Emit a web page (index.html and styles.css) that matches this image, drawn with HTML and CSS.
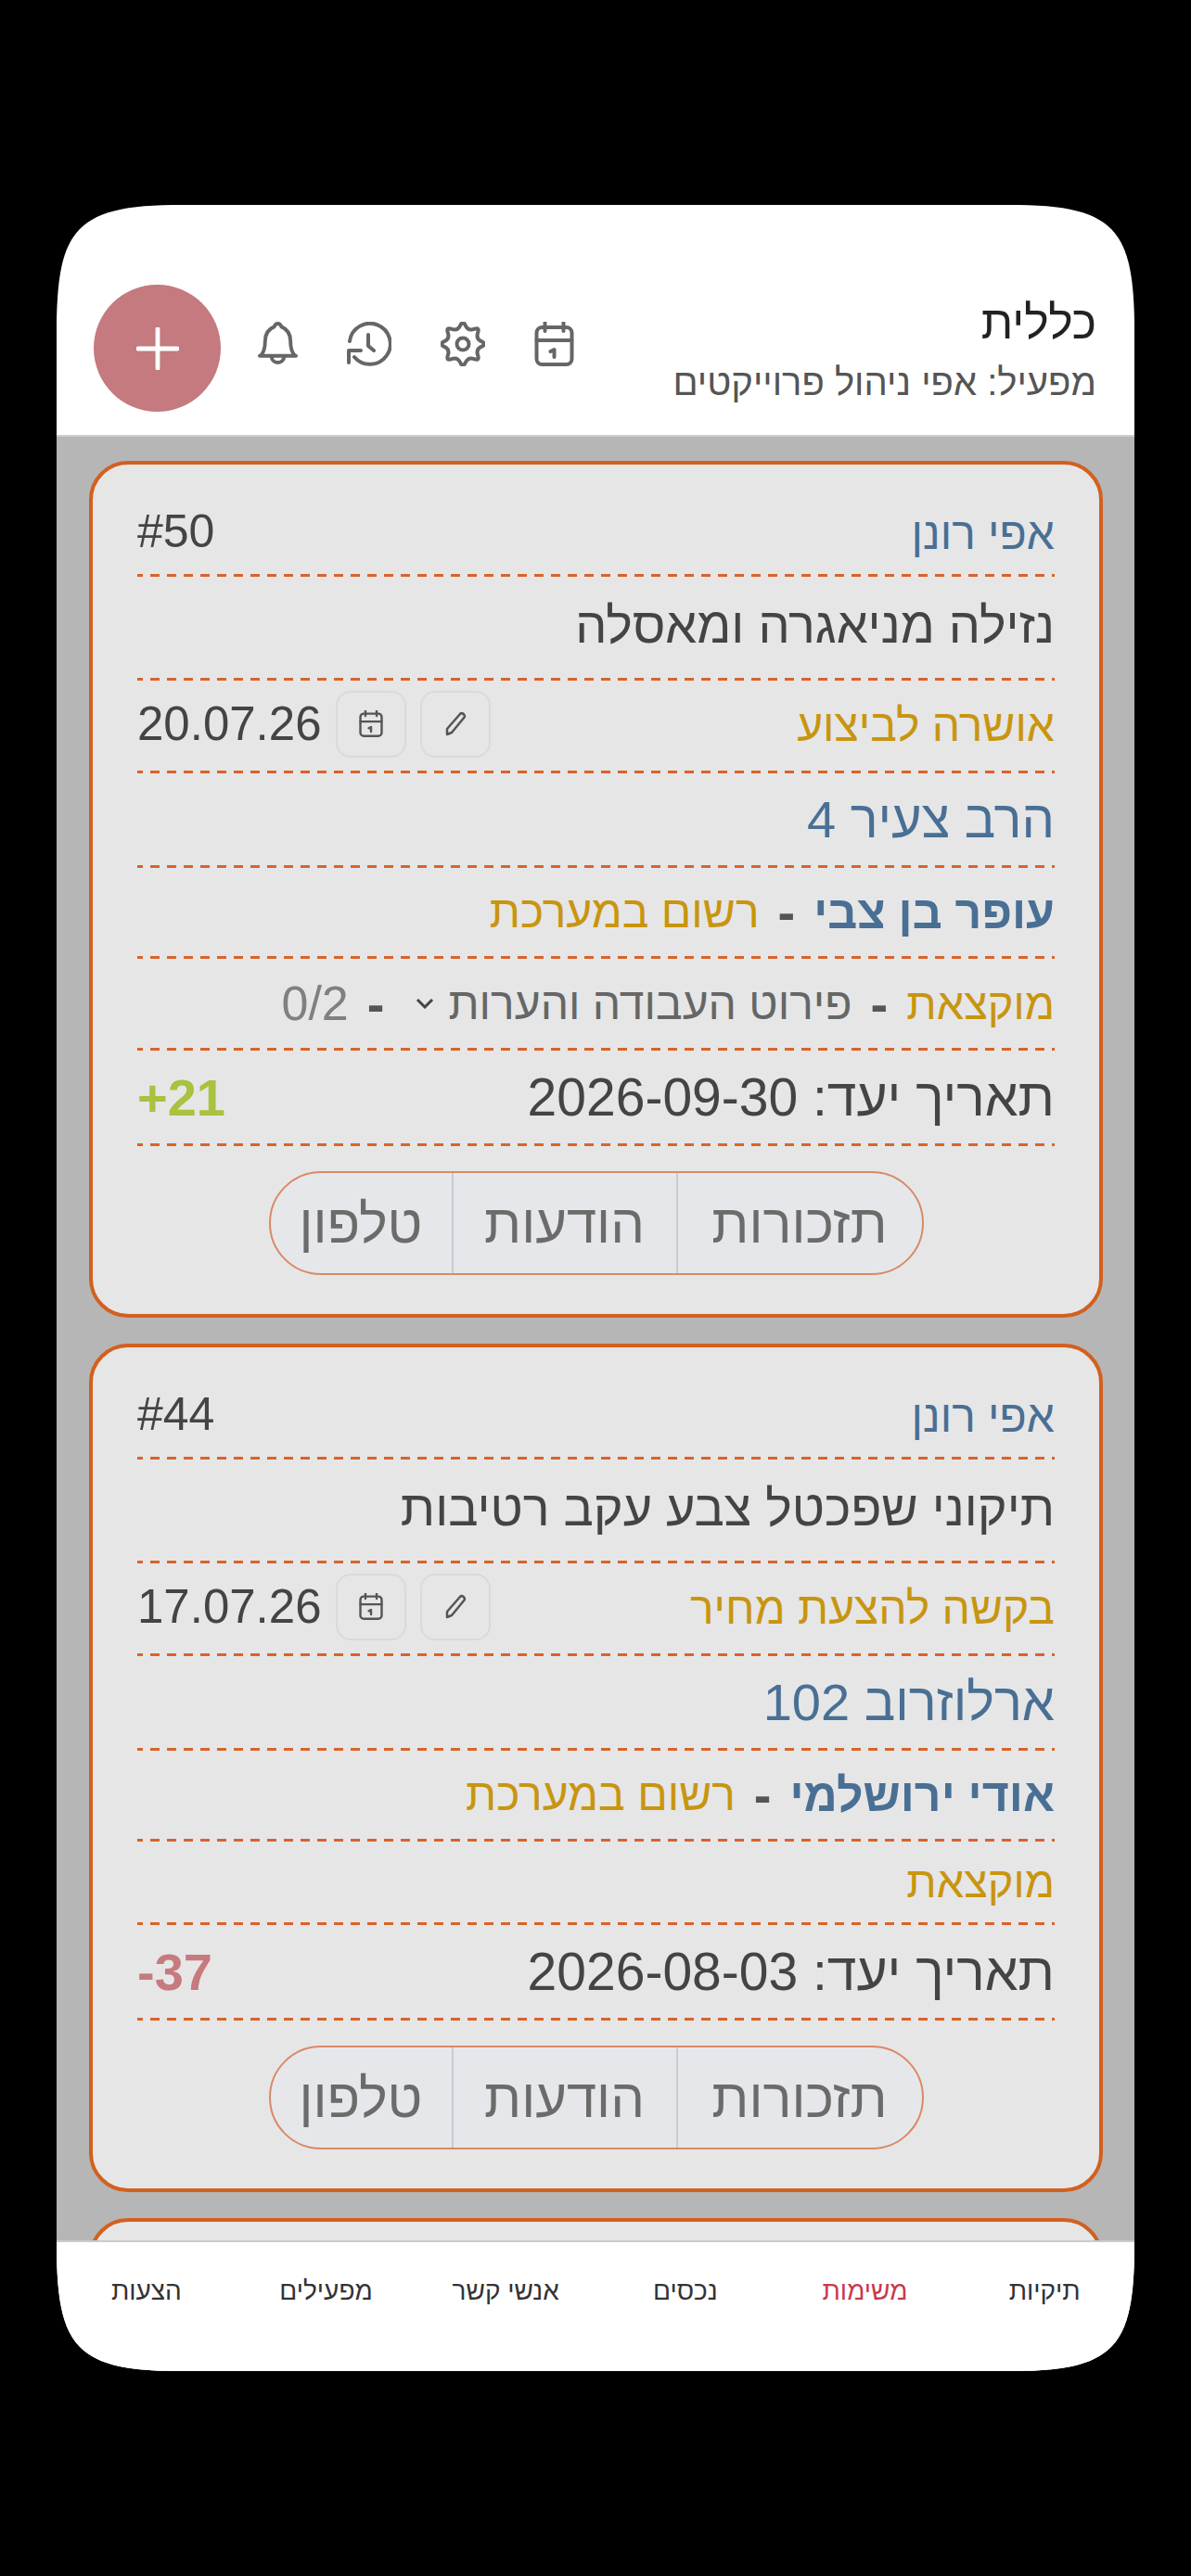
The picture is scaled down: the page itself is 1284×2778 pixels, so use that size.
FILE: index.html
```html
<!DOCTYPE html>
<html lang="he" dir="rtl">
  <head>
    <meta charset="utf-8">
    <title>כללית</title>
    <link rel="stylesheet" href="styles.css">
  </head>
  <body>
    <div class="screen">
      <header class="top-bar">
        <div class="top-titles">
          <h1>כללית</h1>
          <p>מפעיל: אפי ניהול פרוייקטים</p>
        </div>
        <div class="top-actions">
          <svg class="top-icon calendar-icon" viewBox="0 0 42 48"><rect x="2" y="6" width="38" height="40" rx="6"/><path d="M2 20H40M11 1V10M31 1V10M17 32L21 30V38"/></svg>
          <svg class="top-icon" viewBox="0 0 48 48"><path d="M43.93 26.87Q37.86 29.74 40.12 36.06T36.06 40.12T26.87 43.93T21.13 43.93T11.94 40.12T7.88 36.06T4.07 26.87T4.07 21.13T7.88 11.94T11.94 7.88T21.13 4.07T26.87 4.07T36.06 7.88T40.12 11.94T43.93 21.13T43.93 26.87Z"/><circle cx="24" cy="24" r="6.5"/></svg>
          <svg class="top-icon" viewBox="0 0 48 48"><path d="M3 21A22 22 0 1 1 8 38M2 44V31H15M23 14V26L29 31"/></svg>
          <svg class="top-icon bell-icon" viewBox="0 0 44 48"><path d="M2 37H42M3 37C7 33 8 29 8 21C8 12 13 7 18 5C19 2 21 1.5 22 1.5C23 1.5 25 2 26 5C31 7 36 12 36 21C36 29 37 33 41 37M15 37C15 47 29 47 29 37"/></svg>
          <button class="add-button">
            <svg viewBox="0 0 48 48"><path d="M24 2V46M2 24H46"/></svg>
          </button>
        </div>
      </header>

      <main class="task-list">
        <section class="task-card">
          <div class="task-row row-head">
            <span class="owner">אפי רונן</span>
            <span class="task-num">#50</span>
          </div>
          <div class="task-row row-title">נזילה מניאגרה ומאסלה</div>
          <div class="task-row row-status">
            <span class="status">אושרה לביצוע</span>
            <div class="date-group">
              <button class="small-button"><svg class="pencil-icon" viewBox="0 0 24 28"><path d="M3 25L3 19L17 3C19 1 22 3 22 6L8 23Z"/></svg></button>
              <button class="small-button"><svg class="small-calendar" viewBox="0 0 42 48"><rect x="2" y="6" width="38" height="40" rx="6"/><path d="M2 20H40M11 1V10M31 1V10M17 32L21 30V38"/></svg></button>
              <span class="short-date">20.07.26</span>
            </div>
          </div>
          <div class="task-row row-address">הרב צעיר 4</div>
          <div class="task-row row-person">
            <strong>עופר בן צבי</strong>
            <span class="dash">-</span>
            <span class="status">רשום במערכת</span>
          </div>
          <div class="task-row row-assign">
            <span class="status">מוקצאת</span>
            <span class="dash">-</span>
            <span class="details">פירוט העבודה והערות</span>
            <svg class="chevron" viewBox="0 0 20 12"><path d="M2 2L10 10L18 2"/></svg>
            <span class="dash">-</span>
            <span class="count">0/2</span>
          </div>
          <div class="task-row row-due">
            <span>תאריך יעד: 2026-09-30</span>
            <span class="days days-left">+21</span>
          </div>
          <div class="tabs">
            <a class="tab tab-a" href="#">תזכורות</a>
            <a class="tab tab-b" href="#">הודעות</a>
            <a class="tab tab-c" href="#">טלפון</a>
          </div>
        </section>

        <section class="task-card">
          <div class="task-row row-head">
            <span class="owner">אפי רונן</span>
            <span class="task-num">#44</span>
          </div>
          <div class="task-row row-title">תיקוני שפכטל צבע עקב רטיבות</div>
          <div class="task-row row-status">
            <span class="status">בקשה להצעת מחיר</span>
            <div class="date-group">
              <button class="small-button"><svg class="pencil-icon" viewBox="0 0 24 28"><path d="M3 25L3 19L17 3C19 1 22 3 22 6L8 23Z"/></svg></button>
              <button class="small-button"><svg class="small-calendar" viewBox="0 0 42 48"><rect x="2" y="6" width="38" height="40" rx="6"/><path d="M2 20H40M11 1V10M31 1V10M17 32L21 30V38"/></svg></button>
              <span class="short-date">17.07.26</span>
            </div>
          </div>
          <div class="task-row row-address">ארלוזרוב 102</div>
          <div class="task-row row-person">
            <strong>אודי ירושלמי</strong>
            <span class="dash">-</span>
            <span class="status">רשום במערכת</span>
          </div>
          <div class="task-row row-assign row-assign-short">
            <span class="status">מוקצאת</span>
          </div>
          <div class="task-row row-due">
            <span>תאריך יעד: 2026-08-03</span>
            <span class="days days-late">-37</span>
          </div>
          <div class="tabs">
            <a class="tab tab-a" href="#">תזכורות</a>
            <a class="tab tab-b" href="#">הודעות</a>
            <a class="tab tab-c" href="#">טלפון</a>
          </div>
        </section>

        <section class="task-card"></section>
      </main>

      <nav class="bottom-nav">
        <a href="#">תיקיות</a>
        <a href="#" class="active">משימות</a>
        <a href="#">נכסים</a>
        <a href="#">אנשי קשר</a>
        <a href="#">מפעילים</a>
        <a href="#">הצעות</a>
      </nav>
    </div>
  </body>
</html>
```

FILE: styles.css
```css
* {
  box-sizing: border-box;
  margin: 0;
  padding: 0;
}

body {
  height: 2778px;
  padding: 221px 61px 0;
  overflow: hidden;
  background-color: #000;
  font-family: "Liberation Sans", Arial, sans-serif;
  color: #444;
}

/* the phone outline is a squircle, border-radius comes out too round */
.screen {
  display: flex;
  flex-direction: column;
  height: 2336px;
  overflow: hidden;
  background-color: #fff;
  clip-path: path("M0 125C2 30 20 1 125 0H1037C1142 1 1160 30 1162 125V2211C1160 2306 1142 2335 1037 2336H125C20 2335 2 2306 0 2211Z");
}

/* header */
.top-bar {
  display: flex;
  justify-content: space-between;
  align-items: flex-start;
  height: 250px;
  flex: none;
  padding: 86px 41px 0 40px;
  border-bottom: 2px solid #cfcfcf;
}

.top-titles {
  padding-top: 11px;
}

.top-titles h1 {
  font-size: 50px;
  font-weight: normal;
  line-height: 60px;
  color: #222;
}

.top-titles p {
  margin-top: 11px;
  font-size: 40px;
  line-height: 46px;
  color: #555;
}

.top-actions {
  display: flex;
  align-items: center;
  gap: 53px;
}

.top-icon {
  width: 48px;
  height: 48px;
  margin-top: -10px;
  fill: none;
  stroke: #666;
  stroke-width: 4;
  stroke-linecap: round;
  stroke-linejoin: round;
}

.calendar-icon,
.bell-icon {
  width: 43px;
}

.add-button {
  display: flex;
  align-items: center;
  justify-content: center;
  width: 137px;
  height: 137px;
  margin-right: -13px;
  border: none;
  border-radius: 50%;
  background-color: #c47a7e;
}

.add-button svg {
  width: 46px;
  height: 46px;
  fill: none;
  stroke: #fff;
  stroke-width: 5;
  stroke-linecap: round;
}

/* cards */
.task-list {
  flex: 1;
  min-height: 0;
  overflow: hidden;
  display: flex;
  flex-direction: column;
  gap: 28px;
  padding: 26px 34px 0 35px;
  background-color: #b6b6b6;
}

.task-card {
  flex: none;
  min-height: 140px;
  padding: 26px 48px 42px;
  border: 4px solid #d2601f;
  border-radius: 42px;
  background-color: #e6e6e7;
}

/* dashes are 10 on 8 off, a dashed border is too short for that */
.task-row {
  display: flex;
  align-items: center;
  padding-bottom: 3px;
  background: linear-gradient(to right, #d9632a 10px, transparent 10px) -4px bottom / 18px 3px repeat-x;
}

.row-head {
  justify-content: space-between;
  height: 95px;
  font-size: 50px;
}

.owner {
  padding-top: 4px;
  font-size: 48px;
  color: #4a6f94;
}

.row-title {
  height: 112px;
  padding-bottom: 8px;
  font-size: 54px;
}

.row-status {
  justify-content: space-between;
  height: 100px;
}

.status {
  font-size: 48px;
  color: #c8950f;
}

.date-group {
  display: flex;
  align-items: center;
  gap: 15px;
  margin-bottom: 4px;
}

.short-date {
  font-size: 51px;
}

.small-button {
  display: flex;
  align-items: center;
  justify-content: center;
  width: 76px;
  height: 72px;
  border: 2px solid #dadada;
  border-radius: 16px;
  background-color: #e6e6e7;
}

.small-calendar {
  width: 26px;
  height: 29px;
  fill: none;
  stroke: #555;
  stroke-width: 4;
  stroke-linecap: round;
  stroke-linejoin: round;
}

.pencil-icon {
  width: 24px;
  height: 28px;
  fill: none;
  stroke: #555;
  stroke-width: 2.5;
  stroke-linejoin: round;
}

.row-address {
  height: 102px;
  font-size: 56px;
  color: #4a6f94;
}

.row-person {
  gap: 20px;
  height: 98px;
}

.row-person strong {
  font-size: 50px;
  color: #4a6f94;
}

.dash {
  font-size: 56px;
  font-weight: bold;
  color: #555;
}

.row-assign {
  gap: 20px;
  height: 99px;
}

.row-assign .status {
  font-size: 47px;
}

.row-assign-short {
  height: 90px;
}

.details {
  font-size: 48px;
  color: #666;
}

.chevron {
  width: 20px;
  height: 12px;
  margin-right: -5px;
  margin-left: 14px;
  fill: none;
  stroke: #444;
  stroke-width: 3;
}

.count {
  font-size: 52px;
  color: #808080;
}

.row-due {
  justify-content: space-between;
  height: 103px;
  font-size: 57px;
}

.days {
  font-size: 56px;
  direction: ltr;
  font-weight: bold;
}

.days-left {
  color: #a9c23f;
}

.days-late {
  color: #c77a7e;
}

/* pill tabs */
.tabs {
  display: flex;
  width: 706px;
  height: 112px;
  margin: 27px auto 0;
  overflow: hidden;
  border: 2px solid #d98a66;
  border-radius: 56px;
  background-color: #e6e7ea;
}

.tab {
  display: flex;
  align-items: center;
  justify-content: center;
  font-size: 58px;
  color: #6b6b6b;
  text-decoration: none;
  border-left: 2px solid #c9cbd0;
}

.tab-a {
  width: 265px;
}

.tab-b {
  width: 242px;
}

.tab-c {
  flex: 1;
  border-left: none;
}

/* bottom nav */
.bottom-nav {
  display: grid;
  grid-template-columns: repeat(6, 1fr);
  flex: none;
  height: 141px;
  padding-top: 33px;
  align-items: start;
  border-top: 2px solid #c9cbd0;
  background-color: #fff;
}

.bottom-nav a {
  font-size: 28px;
  line-height: 40px;
  text-align: center;
  text-decoration: none;
  color: #333;
}

.bottom-nav a.active {
  color: #c8394e;
}
```
